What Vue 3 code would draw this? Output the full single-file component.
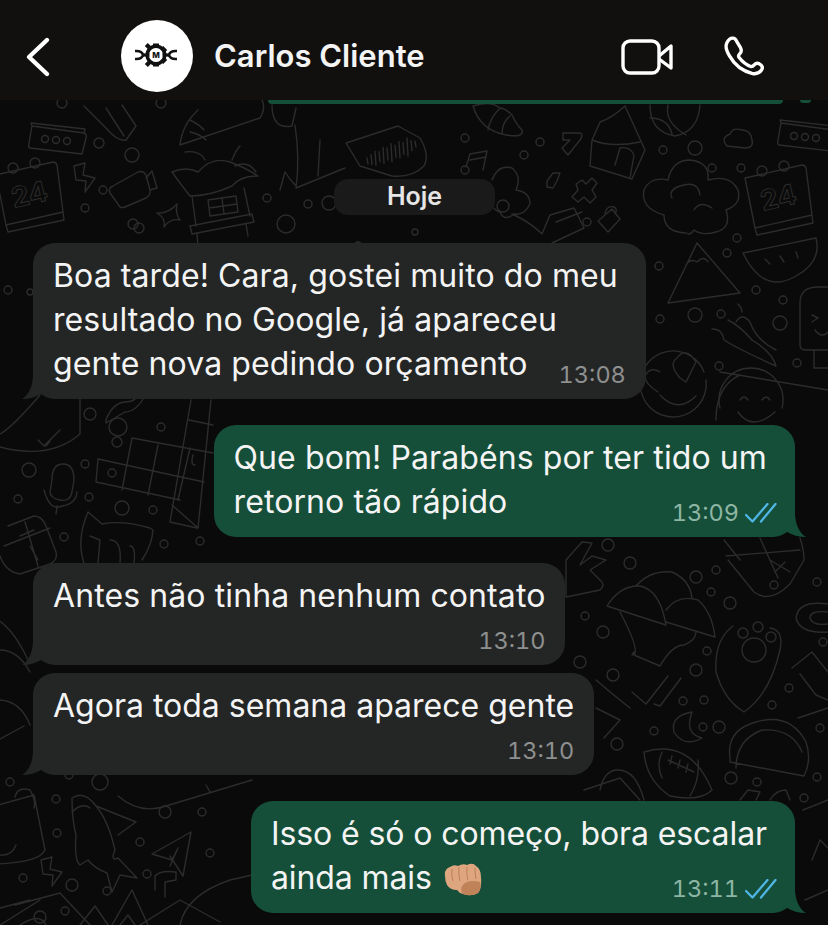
<template>
  <div class="phone">
    <svg class="doodles" width="828" height="925" viewBox="0 0 828 925" fill="none" aria-hidden="true">
      <defs>
        <g id="calendar">
          <path d="M0 15 L57 2 Q60 2 61 5 L67 52 L10 65 Z M10 65 L12 72 L68 60 L67 52" />
          <circle cx="17" cy="8" r="5" />
          <circle cx="39" cy="3" r="5" />
          <text x="18" y="48" transform="rotate(-13 18 48)" class="doodle-num">24</text>
        </g>
        <g id="msgbox">
          <path d="M4 3 L56 10 Q59 11 58 15 L54 31 L2 25 Q0 25 1 20 Z M4 3 L3 0 L57 6 L56 10" />
          <circle cx="17" cy="16" r="3.5" />
          <circle cx="28" cy="17" r="3.5" />
          <circle cx="39" cy="18" r="3.5" />
        </g>
        <g id="bolt">
          <path d="M1 3 L12 0 L10 12 L22 15 L12 29 L13 18 L3 17 Z" />
        </g>
      </defs>

      <use href="#calendar" x="-4" y="160" />
      <use href="#calendar" x="745" y="163" />
      <use href="#msgbox" x="28" y="123" />
      <use href="#msgbox" x="777" y="120" />
      <use href="#bolt" x="73" y="163" />
      <use href="#bolt" x="40" y="857" />

      <path v-for="(d, i) in doodles" :key="i" :d="d" />
      <path :d="waveform" />
      <circle v-for="(c, i) in dots" :key="'c' + i" :cx="c[0]" :cy="c[1]" :r="c[2]" />
    </svg>

    <header class="topbar">
      <svg class="back" width="28" height="42" viewBox="0 0 28 42" fill="none">
        <path d="M23 4 L5 21 L23 38" stroke="#fff" stroke-width="4.4" stroke-linecap="round" stroke-linejoin="round" />
      </svg>
      <div class="avatar">
        <svg width="72" height="72" viewBox="0 0 72 72">
          <path d="M14 31 Q21 30.5 22 35 Q21 39.5 14 39 M56 31 Q49 30.5 48 35 Q49 39.5 56 39" fill="none" stroke="#111" stroke-width="2.6" />
          <path d="M21 33.4h28v3.2H21z" fill="#111" />
          <circle cx="35" cy="35" r="8.8" fill="none" stroke="#111" stroke-width="3.6" />
          <path d="M32 23.5h6v4h-6z M32 42.5h6v4h-6z M42.2 26l4 4-3 3-4-4z M23.8 26l4 4 3-3-4-4z M42.2 44l4-4-3-3-4 4z M23.8 44l4-4 3 3-4 4z" fill="#111" />
          <circle cx="35" cy="35" r="6.6" fill="#fff" />
          <text x="35" y="38" class="logo-m">M</text>
        </svg>
      </div>
      <div class="name">Carlos Cliente</div>
      <svg class="video" width="52" height="36" viewBox="0 0 52 36" fill="none" stroke="#fff" stroke-width="3.4" stroke-linejoin="round">
        <rect x="2" y="2" width="36" height="32" rx="7" />
        <path d="M38 17 L50 7 L50 29 L38 20" />
      </svg>
      <svg class="call" width="44" height="44" viewBox="482 97 138 138" fill="none">
        <path d="M497 125 Q505 108 518 110 Q524 111 528 120 L540 140 Q546 152 537 160 Q532 165 535 170 Q552 192 572 199 Q578 200 583 194 Q592 184 604 194 Q612 202 606 210 Q596 224 578 221 Q530 210 505 165 Q490 140 497 125 Z" stroke="#fff" stroke-width="10.5" stroke-linejoin="round" />
      </svg>
    </header>

    <main class="chat">
      <div class="prev-bubble"></div>
      <div class="day">Hoje</div>

      <div
        v-for="m in messages"
        :key="m.id"
        class="bubble"
        :class="[m.out ? 'out' : 'in', m.fit, { tight: m.tight, roomy: m.inline }]"
      >
        <svg class="tail" width="30" height="24" viewBox="0 0 30 24">
          <path d="M12 0 C12 10 8 20 1 24 C8 24 15 22 20 19 L30 10 L12 0 Z" />
        </svg>
        <div class="text">
          <template v-for="(line, i) in m.lines" :key="i">
            {{ line }}<br v-if="i < m.lines.length - 1" />
          </template>
          <svg v-if="m.fist" class="fist" width="38" height="33" viewBox="0 0 38 33">
            <path d="M1 13 Q0 6 6 4 Q10 1 14 3 Q19 0 23 2 Q29 -1 32 3 Q37 6 37 14 Q38 25 34 30 Q27 34 19 31 Q15 30 13 27 Q6 27 3 22 Q1 18 1 13 Z" fill="#dea67e" />
            <path d="M23 19 Q29 17 36 19 Q38 26 34 30 Q27 34 19 31 Q16 27 18 23 Q20 20 23 19 Z" fill="#bf8259" />
            <path d="M8 6 Q7 12 9 18 M15 4 Q14 11 16 18 M23 4 Q22 11 24 17 M31 5 Q31 11 32 16" stroke="#bc8058" stroke-width="1" fill="none" />
          </svg>
        </div>
        <div class="meta" :class="{ below: !m.inline }">
          <span class="time">{{ m.time }}</span>
          <svg v-if="m.out" class="ticks" width="32" height="20" viewBox="0 0 32 20" fill="none">
            <path d="M1 12 L7.5 18.5 L22.5 1 M16 18.5 L30.5 1" stroke="#4fb6e4" stroke-width="2.3" stroke-linecap="round" stroke-linejoin="round" />
          </svg>
        </div>
      </div>
    </main>
  </div>
</template>

<script setup>
const messages = [
  {
    id: 1,
    lines: ['Boa tarde! Cara, gostei muito do meu', 'resultado no Google, já apareceu', 'gente nova pedindo orçamento'],
    time: '13:08',
    inline: true,
  },
  {
    id: 2,
    lines: ['Que bom! Parabéns por ter tido um', 'retorno tão rápido'],
    time: '13:09',
    out: true,
    inline: true,
  },
  { id: 3, lines: ['Antes não tinha nenhum contato'], time: '13:10' },
  { id: 4, lines: ['Agora toda semana aparece gente'], time: '13:10', tight: true, fit: 'flat' },
  {
    id: 5,
    lines: ['Isso é só o começo, bora escalar', 'ainda mais'],
    time: '13:11',
    out: true,
    inline: true,
    fist: true,
    fit: 'snug',
  },
]

// background wallpaper, page coordinates
const doodles = [
  // hut
  'M172 172 Q186 166 198 172 Q212 156 230 162 Q246 168 258 176 Q240 176 232 186 Q210 196 190 196 Q182 186 172 172 Z',
  'M205 160 Q200 150 185 152 M232 160 Q236 150 240 146 M235 166 Q248 160 256 172',
  'M192 196 L196 226 M244 188 L250 216 M208 200 L236 196 L238 212 L210 216 Z M222 198 L224 214 M209 208 L237 204',
  'M190 226 L252 214 L254 222 L192 234 Z M197 234 L198 246 M246 224 L248 236',
  // video camera
  'M113 186 L138 172 Q143 170 146 175 L150 190 Q151 195 146 198 L125 207 Q120 209 118 204 L110 193 Q108 188 113 186 Z M146 178 L152 171 L157 188 L150 190',
  // sparkle
  'M177 204 Q175 214 180 220 Q170 218 164 227 Q166 218 157 213 Q168 214 177 204 Z',
  // audio message
  'M346 143 L398 126 L420 138 Q430 155 424 166 Q412 178 392 176 L360 166 Z',
  // top centre figures
  'M272 105 Q272 130 292 126 L296 108 M295 125 Q300 158 296 188 M296 188 L345 168 M320 140 L318 176 M280 190 L285 172 Q290 180 296 186',
  // left top
  'M84 106 Q92 114 106 128 Q118 142 126 140 L136 126 L122 105 M106 108 L124 136',
  'M180 145 L260 118 Q266 108 262 100 M180 145 Q182 125 198 110 M190 120 Q200 125 204 130 M190 132 Q200 134 206 140',
  // shell, note, arrow
  'M473 106 Q480 130 506 135 Q524 138 522 130 Q516 124 512 115 Q505 108 500 108 Q490 100 473 106 Z M500 108 Q490 118 488 130 M510 116 Q502 122 502 134',
  'M466 167 L470 154 L487 151 L483 170 M470 160 L486 157',
  'M563 133 L580 133 Q584 134 580 140 L568 155 L562 148 L570 140 L563 140 Z',
  // little house
  'M592 140 L600 122 Q612 118 625 106 L645 150 L632 179 L590 166 Z M592 140 Q612 148 640 142 M615 165 L620 148 Q630 146 634 155 L630 178',
  // basketball
  'M650 105 Q650 132 675 136 Q698 132 700 105 M668 105 Q664 122 686 135 M650 118 Q668 118 672 134',
  // cloud
  'M727 146 Q720 138 730 134 Q733 127 742 130 Q751 130 752 140 Q754 148 745 148 Z',
  // hexagon, cross, lock
  'M547 181 L553 173 L560 173 L557 181 L553 188 L547 187 Z',
  'M576 184 L582 180 L586 184 L592 178 L597 183 L592 190 L596 197 L590 203 L584 197 L578 202 L572 197 L578 190 Z',
  'M598 221 L612 209 L620 219 L608 232 Z M605 213 Q607 205 614 207 Q618 209 615 214',
  // flowers near chip
  'M492 180 Q498 164 512 168 Q522 176 516 190 Q530 192 530 204 Q524 216 514 214 Q504 222 500 212 Q488 208 492 196 M497 206 a6 6 0 1 0 12 0 a6 6 0 1 0 -12 0',
  'M512 214 Q530 222 542 234 L550 215 L574 208 L584 228 L552 243 M556 222 L582 212',
  // volcano tree
  'M668 303 L740 293 L697 243 Z M686 265 Q690 258 697 262 Q704 255 708 262',
  'M686 233 Q664 232 664 215 Q640 208 644 190 Q650 176 668 180 Q672 160 690 160 Q710 162 708 180 Q730 174 738 190 Q742 204 726 210 Q732 228 716 232 Q702 236 694 230 Q690 236 686 233 Z M672 198 Q668 190 680 186 Q698 180 700 195 M694 210 Q700 200 712 208',
  // watermelon
  'M743 253 L816 238 Q822 262 796 276 Q776 288 760 276 Q750 268 743 253 Z M765 259 L770 264 M780 256 L784 262 M796 252 L798 258',
  // chilli
  'M712 329 Q722 328 724 340 Q740 350 776 366 Q772 352 752 340 Q740 326 728 320 M736 322 Q742 312 750 322 Q756 340 776 350 M742 312 Q742 308 738 304',
  // popsicle
  'M800 303 Q800 288 816 287 L832 287 M800 303 L800 345 Q800 350 806 350 L832 350 M814 350 L814 368 L832 368 M812 315 L818 318 L812 322 M815 330 Q822 340 830 330',
  // heart smiley
  'M706 380 A33 33 0 1 1 704 372 M696 362 Q686 346 677 358 Q668 364 680 378 L686 382 Z M660 372 Q650 366 645 376 Q645 384 658 392 M660 395 Q678 414 696 396',
  // grin smiley
  'M720 408 A32 32 0 1 1 782 408 M740 400 Q744 394 748 400 M762 400 Q766 394 770 400 M738 412 Q752 432 775 412',
  'M720 372 L828 390 M716 420 Q716 386 740 375',
  // left margin under first bubble
  'M40 395 Q10 430 -2 435 M0 447 Q50 460 80 434 Q80 410 80 395',
  'M38 440 L44 446 L60 430 M46 446 L50 441',
  'M106 420 Q112 404 124 402 Q140 402 136 390 Q144 384 145 396 Q136 412 125 412 L106 423 Z',
  // crossword
  'M132 438 L213 453 M132 438 L122 490 M98 459 L204 482 M98 459 L96 482 L180 500 M158 445 L148 495 M190 448 L178 500 M172 505 L198 528 L211 400 M191 400 L170 522 L197 528 M189 420 L213 425',
  'M108 473 a4 4 0 1 0 8 0 a4 4 0 1 0 -8 0 M193 455 Q190 465 195 465',
  // mic
  'M52 480 Q52 464 63 464 Q74 464 74 480 L72 492 Q70 502 60 500 Q50 498 50 492 Z M44 490 Q50 512 62 506 Q76 504 77 492 M57 506 L56 514',
  // cat
  'M88 512 L102 524 Q122 520 150 528 L153 530 Q152 545 142 560 M88 512 Q76 540 84 563 M90 536 L100 540 L98 563 M110 540 Q122 540 120 563 M130 546 Q136 546 134 563',
  // calculator
  'M8 526 L34 516 Q42 516 46 526 L56 552 Q58 560 50 564 L20 574 Q6 572 0 556 M4 546 L50 528 M25 522 L38 566 M20 536 L34 530 M30 546 L38 560',
  // left lower
  'M-2 620 Q14 630 28 660 M0 650 Q18 650 30 672',
  'M-2 700 Q20 700 30 725 M-2 740 L24 726',
  // rocket
  'M72 798 Q84 790 96 806 Q108 820 115 850 Q110 862 118 858 L137 878 L120 875 L112 892 L107 873 Q94 868 88 860 L80 865 Q74 860 76 835 Q72 820 72 798 Z M96 806 L136 822 L118 835 M72 812 Q82 802 90 808',
  // bag on left
  'M-2 805 L34 795 L45 850 Q40 862 -2 864 M15 797 Q18 786 30 790 Q36 800 34 808 M0 855 Q12 856 16 845',
  // paper plane
  'M152 854 L191 832 L183 876 L170 856 M152 854 L172 860 L178 848 L170 866',
  // mountains
  'M80 925 L95 906 L108 925 M112 925 L132 890 L148 925 M120 925 L128 915 L135 925',
  // big lower left shape
  'M118 796 Q140 815 166 806 L252 780 M206 785 L210 792',
  'M155 890 L155 876 Q160 870 176 872 L176 880 L165 882 L165 897 M140 925 L180 900 L220 922',
  // hand sign
  'M566 597 L600 590 Q606 585 600 580 L590 570 L606 560 L592 556 L580 565 L592 543 L582 542 L566 560 Z',
  // helmets / mushrooms
  'M607 606 Q620 585 640 586 Q660 590 666 625 Z M666 610 Q678 594 698 600 Q712 612 715 637 L666 622 M636 586 Q650 570 672 572 Q690 580 692 598',
  'M620 612 Q640 650 634 655 L660 666 Q672 645 684 645 Q696 640 696 632 M634 655 L634 652 L632 655',
  // paw
  'M733 626 Q714 640 716 672 Q724 700 744 712 Q770 694 780 650 Q784 630 770 628',
  // double tick
  'M632 692 L646 704 L668 676 M654 704 L660 706 L681 678',
  // moon
  'M692 712 Q670 716 674 732 Q684 748 702 738 Q684 734 692 712 Z',
  // football
  'M644 752 Q690 738 712 790 Q700 802 670 796 Q646 780 644 752 Z M662 752 Q656 765 662 778 M698 760 Q700 780 690 796 M668 760 L694 772 M672 756 L670 764 M680 760 L678 768 M688 764 L686 772',
  // taco
  'M730 758 Q726 730 756 722 Q790 712 806 742 Q812 760 804 776 L730 762 Z M736 768 Q736 740 762 730 Q792 728 802 752',
  // calculator right
  'M724 540 L740 560 M728 560 L754 592 Q770 604 790 584 L804 560 Q804 550 800 538 M726 556 L800 550 M760 538 L778 578 M770 560 L790 572 M785 562 L775 572',
  // right ring, cup, ticks
  'M828 604 Q798 600 796 618 Q800 634 828 632 M828 612 Q810 610 810 618 Q812 626 828 624',
  'M792 668 L812 652 L828 672 M800 674 L816 695 L828 700',
  'M798 718 L828 708',
  // misc near bubble 4
  'M596 680 Q612 694 630 708 M596 708 Q608 714 620 720 L604 738',
  'M600 790 Q604 770 618 770 Q636 770 644 800 M584 790 L620 778 L640 800',
  // right bottom
  'M740 800 L748 790 L760 792 L756 800 M770 800 Q776 790 786 790 L790 800',
  'M803 810 L828 800 M812 860 L820 840 L828 848 M805 900 L828 890',
  // bottom gap
  'M15 905 L60 893 L90 925 M0 925 L40 900 M0 908 L30 900',
  'M180 925 Q186 895 230 880 L252 875',
  'M20 925 Q40 912 46 925',
]

const dots = [
  [62, 103, 5], [161, 103, 5], [99, 143, 5], [132, 155, 7], [103, 190, 4], [85, 208, 4], [133, 224, 5],
  [267, 198, 4], [308, 204, 4], [329, 203, 7], [286, 224, 9], [358, 245, 3], [139, 228, 5],
  [465, 138, 4], [540, 142, 4], [524, 155, 4], [465, 170, 4], [663, 150, 4], [695, 148, 7], [712, 168, 4],
  [741, 168, 4], [737, 238, 4], [727, 253, 4], [659, 266, 4], [756, 290, 4], [783, 300, 4], [695, 315, 7],
  [721, 314, 4], [780, 323, 7], [660, 319, 4], [587, 222, 4], [797, 363, 4], [719, 366, 4],
  [8, 290, 4], [30, 292, 3], [90, 414, 6], [118, 427, 9], [117, 442, 5], [161, 427, 4], [85, 464, 4],
  [29, 470, 7], [18, 499, 4], [89, 497, 4], [122, 508, 7], [153, 510, 4], [64, 537, 4], [164, 544, 4], [200, 541, 4],
  [608, 545, 6], [630, 563, 6], [696, 577, 6], [716, 570, 4], [711, 592, 4], [730, 603, 6], [774, 585, 4],
  [585, 616, 4], [603, 632, 6], [580, 662, 6], [613, 675, 6], [707, 651, 4], [696, 670, 6], [704, 700, 4],
  [683, 701, 4], [703, 727, 4], [719, 727, 6], [654, 731, 4], [617, 744, 6], [731, 778, 6], [757, 782, 4],
  [817, 582, 4], [823, 642, 4], [789, 688, 4], [772, 705, 4], [820, 728, 4], [817, 777, 4], [804, 798, 4],
  [10, 782, 4], [69, 775, 4], [100, 782, 8], [56, 799, 4], [57, 833, 4], [165, 812, 6], [202, 812, 4],
  [140, 842, 4], [147, 874, 4], [210, 853, 4], [23, 878, 4], [72, 885, 6], [107, 891, 4], [65, 911, 4],
  [40, 917, 6], [415, 232, 3], [340, 202, 3],
  // paw pads
  [754, 650, 12], [743, 633, 5], [758, 627, 5], [771, 637, 5],
]

// fake voice note bars
const waveform = Array.from({ length: 13 }, (_, i) => {
  const x = 367 + i * 4
  const h = [6, 10, 14, 10, 16, 12, 18, 12, 16, 12, 18, 10, 6][i]
  const y = 161 - i * 1.4
  return `M${x} ${y - h / 2} L${x + 1} ${y + h / 2}`
}).join(' ')
</script>

<style scoped>
.phone {
  position: relative;
  width: 828px;
  height: 925px;
  overflow: hidden;
  background: #0a0a0a;
  font-family: Inter, "Liberation Sans", sans-serif;
}

.doodles {
  position: absolute;
  top: 0;
  left: 0;
  stroke: #2c2c2c;
  stroke-width: 1.4;
  stroke-linecap: round;
  stroke-linejoin: round;
}

.doodle-num {
  font-family: Inter, sans-serif;
  font-size: 28px;
  font-weight: 700;
  stroke-width: 1;
}

.topbar {
  position: relative;
  display: flex;
  align-items: center;
  height: 100px;
  box-sizing: border-box;
  padding-top: 12px;
  background: #12100f;
}

.back {
  margin-left: 24px;
  margin-top: 2px;
}

.avatar {
  width: 72px;
  height: 72px;
  margin-left: 69px;
  border-radius: 50%;
  background: #fff;
}

.logo-m {
  font-family: Inter, sans-serif;
  font-size: 8px;
  font-weight: 800;
  text-anchor: middle;
  fill: #111;
}

.name {
  flex: 1;
  margin-left: 21px;
  margin-bottom: 2px;
  color: #f4f4f4;
  font-size: 31px;
  font-weight: 600;
}

.video {
  margin-right: 49px;
  margin-top: 1px;
}

.call {
  margin-right: 62px;
}

.chat {
  position: relative;
  display: flex;
  flex-direction: column;
}

.prev-bubble {
  position: relative;
  width: 515px;
  height: 4px;
  margin-left: 268px;
  background: #154f39;
  border-radius: 0 0 8px 8px;
}

/* tail of the message cut off by the header */
.prev-bubble::after {
  content: "";
  position: absolute;
  left: 532px;
  top: 0;
  width: 11px;
  height: 3px;
  background: #154f39;
  border-radius: 0 0 4px 4px;
}

.day {
  align-self: flex-start;
  width: 161px;
  height: 36px;
  margin: 75px 0 0 334px;
  border-radius: 14px;
  background: #1a1a1a;
  color: #e6e6e6;
  font-size: 25px;
  font-weight: 600;
  line-height: 34px;
  text-align: center;
}

.bubble {
  position: relative;
  margin-top: 26px;
  padding: 11px 20px 9px;
  border-radius: 22px;
  color: #f4f4f4;
  font-size: 32px;
  letter-spacing: 0.1px;
  line-height: 44px;
  white-space: nowrap;
}

.bubble.roomy {
  padding-right: 28px;
}

.bubble.tight {
  margin-top: 8px;
}

.bubble.flat {
  letter-spacing: 0;
}

.bubble.snug {
  letter-spacing: -0.09px;
}

.day + .bubble {
  margin-top: 28px;
}

.bubble.in {
  align-self: flex-start;
  margin-left: 33px;
  background: #242626;
}

.bubble.out {
  align-self: flex-end;
  margin-right: 33px;
  background: #154f39;
}

.tail {
  position: absolute;
  bottom: 0;
  left: -12px;
  fill: #242626;
}

.out .tail {
  left: auto;
  right: -12px;
  transform: scaleX(-1);
  fill: #154f39;
}

.fist {
  margin-left: 12px;
  vertical-align: -7px;
}

.meta {
  display: flex;
  align-items: center;
  justify-content: flex-end;
  gap: 6px;
  height: 30px;
  margin-top: -26px;
  margin-right: -8px;
}

.meta.below {
  margin-top: 8px;
  margin-right: 0;
}

.out .meta {
  margin-right: -10px;
}

.time {
  color: #8e8f8f;
  font-size: 23.5px;
  font-variant-numeric: tabular-nums;
  letter-spacing: 0;
  line-height: 30px;
}

.out .time {
  color: #8db5a3;
}
</style>
